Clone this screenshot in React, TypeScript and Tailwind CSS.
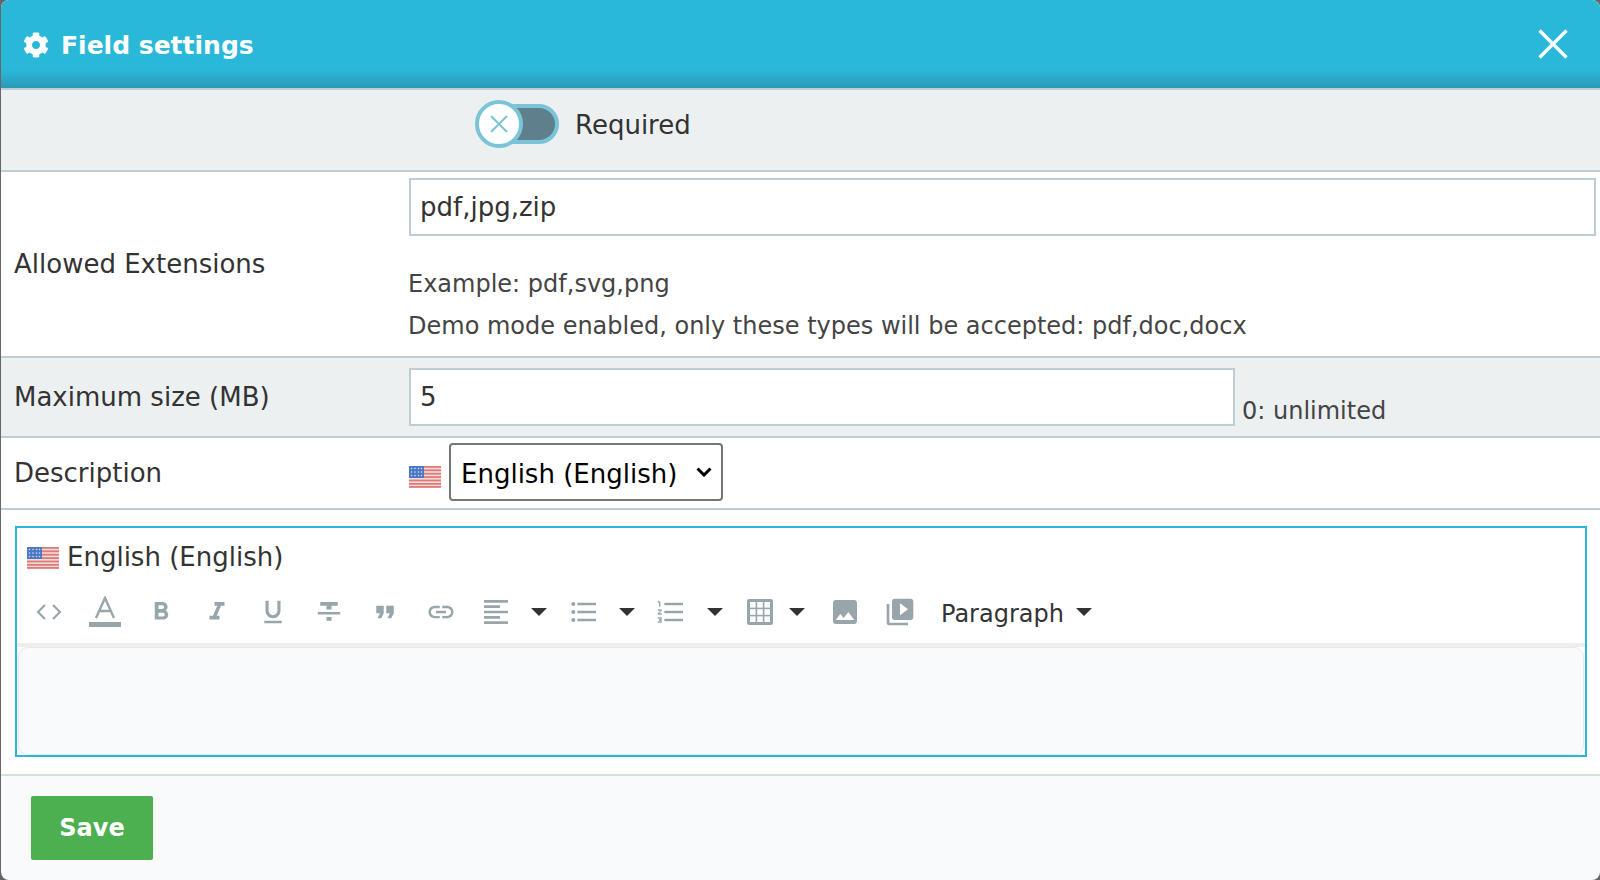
import React from 'react';
import { FaCog } from 'react-icons/fa';
import {
  MdFormatBold,
  MdFormatItalic,
  MdFormatUnderlined,
  MdFormatStrikethrough,
  MdFormatQuote,
  MdLink,
  MdFormatAlignLeft,
  MdFormatListBulleted,
  MdFormatListNumbered,
  MdImage,
  MdVideoLibrary,
} from 'react-icons/md';

function Flag({ className }: { className: string }) {
  return (
    <svg viewBox="0 0 32 22" className={`${className} blur-[0.7px]`} preserveAspectRatio="none">
      <rect width="32" height="22" fill="#eedddd" />
      {[0, 3.4, 6.8, 10.2, 13.6, 17, 20].map((y) => (
        <rect key={y} y={y} width="32" height="1.8" fill="#e07a76" />
      ))}
      <rect width="15" height="12" fill="#4d78c4" />
      {[2.5, 6, 9.5].map((y) =>
        [2.5, 6, 9.5, 12.5].map((x) => <circle key={`${x}-${y}`} cx={x} cy={y} r="0.8" fill="#cfe0f5" />)
      )}
    </svg>
  );
}

function Caret() {
  return <span className="block w-0 h-0 border-x-[8px] border-x-transparent border-t-[8px] border-t-[#333]" />;
}

function ToolBtn({ children, w = 'w-[56px]' }: { children: React.ReactNode; w?: string }) {
  return <div className={`${w} flex items-center justify-center text-[#98a6ab] shrink-0`}>{children}</div>;
}

function Toolbar() {
  return (
    <div className="flex items-center h-[64px] pl-[4px] pb-[3px] border-b-4 border-[#eeeeee]">
      <ToolBtn>
        <svg viewBox="0 0 26 20" className="w-[26px] h-[20px]" fill="none" stroke="currentColor" strokeWidth="2.2">
          <path d="M9 3 L2 10 L9 17" />
          <path d="M17 3 L24 10 L17 17" />
        </svg>
      </ToolBtn>
      <ToolBtn>
        <svg viewBox="0 0 32 32" className="w-[32px] h-[32px]">
          <path d="M7 22 L16 2 L25 22 M10.5 15 H21.5" fill="none" stroke="currentColor" strokeWidth="2.4" />
          <rect y="26" width="32" height="5" fill="currentColor" />
        </svg>
      </ToolBtn>
      <ToolBtn>
        <MdFormatBold size={30} />
      </ToolBtn>
      <ToolBtn>
        <MdFormatItalic size={30} />
      </ToolBtn>
      <ToolBtn>
        <MdFormatUnderlined size={30} />
      </ToolBtn>
      <ToolBtn>
        <MdFormatStrikethrough size={30} />
      </ToolBtn>
      <ToolBtn>
        <MdFormatQuote size={30} />
      </ToolBtn>
      <ToolBtn>
        <MdLink size={30} />
      </ToolBtn>
      <ToolBtn w="w-[54px]">
        <MdFormatAlignLeft size={32} />
      </ToolBtn>
      <ToolBtn w="w-[32px]">
        <Caret />
      </ToolBtn>
      <ToolBtn w="w-[58px]">
        <MdFormatListBulleted size={32} />
      </ToolBtn>
      <ToolBtn w="w-[28px]">
        <Caret />
      </ToolBtn>
      <ToolBtn w="w-[60px]">
        <MdFormatListNumbered size={32} />
      </ToolBtn>
      <ToolBtn w="w-[28px]">
        <Caret />
      </ToolBtn>
      <ToolBtn w="w-[56px] ml-[3px]">
        <svg viewBox="0 0 26 26" className="w-[26px] h-[26px]">
          <rect width="26" height="26" rx="2" fill="currentColor" />
          {[3, 10.2, 17.4].map((y) =>
            [3, 10.2, 17.4].map((x) => <rect key={`${x}-${y}`} x={x} y={y} width="5.6" height="5.6" fill="#fff" />)
          )}
        </svg>
      </ToolBtn>
      <ToolBtn w="w-[18px]">
        <Caret />
      </ToolBtn>
      <ToolBtn w="w-[78px]">
        <MdImage size={32} />
      </ToolBtn>
      <ToolBtn w="w-[32px]">
        <MdVideoLibrary size={32} />
      </ToolBtn>
      <span className="ml-[25px] mt-[4px] text-[24px] text-[#333] leading-none">Paragraph</span>
      <span className="ml-[12px]">
        <Caret />
      </span>
    </div>
  );
}

export default function App() {
  return (
    <div className="h-[880px] w-full overflow-hidden bg-[#666] pl-px font-['DejaVu_Sans',sans-serif] text-[26px] text-[#333]">
      <div className="h-full bg-[#f9fafc] rounded-[8px] overflow-hidden flex flex-col">
        <header className="h-[90px] shrink-0 flex items-center justify-between pl-[22px] pr-[32px] border-b-2 border-[#bccdd4] bg-gradient-to-b from-[#29b8d8] from-80% to-[#2a9ab6] text-white">
          <div className="flex items-center gap-[12px] pt-[2px]">
            <FaCog size={26} />
            <h1 className="text-[25px] font-bold leading-none">Field settings</h1>
          </div>
          <svg viewBox="0 0 30 30" className="w-[30px] h-[30px]" stroke="#fff" strokeWidth="3.2">
            <path d="M1.5 1.5 L28.5 28.5 M28.5 1.5 L1.5 28.5" />
          </svg>
        </header>

        <div className="h-[82px] shrink-0 flex items-center pl-[474px] pb-[12px] border-b-2 border-[#bccdd4] bg-[#ecf0f1]">
          <div className="relative w-[84px] h-[48px] flex items-center">
            <div className="ml-[4px] w-[80px] h-[40px] rounded-full border-4 border-[#7bc4d8] bg-[#5f7f8c]" />
            <div className="absolute left-0 top-0 w-[48px] h-[48px] rounded-full border-4 border-[#7bc4d8] bg-white flex items-center justify-center">
              <svg viewBox="0 0 20 20" className="w-[20px] h-[20px]" stroke="#7bc4d8" strokeWidth="2">
                <path d="M2 2 L18 18 M18 2 L2 18" />
              </svg>
            </div>
          </div>
          <span className="ml-[16px] mt-[2px]">Required</span>
        </div>

        <div className="h-[186px] shrink-0 flex bg-white border-b-2 border-[#bccdd4] pr-[4px]">
          <label className="w-[408px] shrink-0 pl-[13px] self-center">Allowed Extensions</label>
          <div className="flex-1 pt-[6px]">
            <input
              readOnly
              value="pdf,jpg,zip"
              className="w-full h-[58px] px-[9px] border-2 border-[#bccdd4] text-[26px] outline-none"
            />
            <p className="mt-[27px] -ml-px text-[24px] leading-[42px] text-[#444]">Example: pdf,svg,png</p>
            <p className="-ml-px text-[24px] leading-[42px] text-[#444]">Demo mode enabled, only these types will be accepted: pdf,doc,docx</p>
          </div>
        </div>

        <div className="h-[80px] shrink-0 flex items-center border-b-2 border-[#bccdd4] bg-[#ecf0f1]">
          <label className="w-[408px] shrink-0 pl-[13px]">Maximum size (MB)</label>
          <input
            readOnly
            value="5"
            className="w-[826px] h-[58px] px-[9px] bg-white border-2 border-[#bccdd4] text-[26px] outline-none"
          />
          <span className="ml-[7px] mt-[28px] text-[24px] text-[#444]">0: unlimited</span>
        </div>

        <div className="h-[72px] shrink-0 flex items-center border-b-2 border-[#bccdd4] bg-white">
          <label className="w-[408px] shrink-0 pl-[13px]">Description</label>
          <Flag className="w-[32px] h-[22px] mt-[8px]" />
          <div className="relative ml-[8px] mb-[2px]">
            <select className="block w-[274px] h-[58px] pl-[10px] pt-[4px] appearance-none border-2 border-[#767676] rounded-[4px] bg-white text-black text-[26px]">
              <option>English (English)</option>
            </select>
            <svg viewBox="0 0 16 10" className="absolute right-[11px] top-[24px] w-[16px] h-[10px] pointer-events-none" fill="none" stroke="#000" strokeWidth="3">
              <path d="M1.5 1.5 L8 8 L14.5 1.5" />
            </svg>
          </div>
        </div>

        <div className="shrink-0 bg-white pt-[16px] pb-[17px] border-b-2 border-[#d5e0e0]">
          <div className="ml-[14px] mr-[13px] h-[231px] border-2 border-[#29b8d8] flex flex-col">
            <div className="h-[55px] shrink-0 flex items-center pl-[10px] pt-[4px]">
              <Flag className="w-[32px] h-[22px]" />
              <span className="ml-[8px]">English (English)</span>
            </div>
            <Toolbar />
            <div className="flex-1 bg-[#f9fafc] rounded-[10px] border border-[#e8e8e8] mx-[1px]" />
          </div>
        </div>

        <footer className="flex-1 pl-[30px] pt-[20px]">
          <button className="w-[122px] h-[64px] rounded-[2px] bg-[#4caf50] text-white text-[24px] font-bold">Save</button>
        </footer>
      </div>
    </div>
  );
}
